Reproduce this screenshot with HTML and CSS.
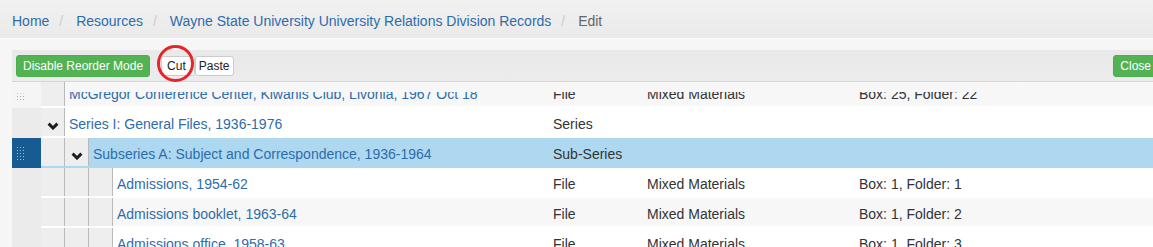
FILE: index.html
```html
<!DOCTYPE html>
<html>
<head>
	<title>Edit - Wayne State University University Relations Division Records</title>
	<link rel="stylesheet" href="styles.css">
</head>
<body>
	<nav class="crumbs">
		<a href="#">Home</a><span class="sep">/</span>
		<a href="#">Resources</a><span class="sep">/</span>
		<a href="#">Wayne State University University Relations Division Records</a><span class="sep">/</span>
		<span class="current">Edit</span>
	</nav>

	<div class="main">
		<div class="toolbar">
			<button type="button" class="btn btn-green">Disable Reorder Mode</button>
			<span class="marked"><button type="button" class="btn btn-plain btn-cut">Cut</button></span>
			<button type="button" class="btn btn-plain btn-paste">Paste</button>
			<button type="button" class="btn btn-green btn-close">Close</button>
		</div>

		<div class="tree">
			<div class="tree-inner">
				<div class="row row-peek">
					<div class="handle handle-light"><span class="grip"></span></div>
					<div class="row-body shade">
						<div class="indent"></div>
						<div class="cell title"><a href="#">McGregor Conference Center, Kiwanis Club, Livonia, 1967 Oct 18</a></div>
						<div class="cell type">File</div>
						<div class="cell format">Mixed Materials</div>
						<div class="cell container">Box: 25, Folder: 22</div>
					</div>
				</div>

				<div class="row">
					<div class="handle"></div>
					<div class="row-body">
						<div class="indent"><svg class="chevron" viewBox="0 0 12 8"><polyline points="1.6,1.6 6,6 10.4,1.6"/></svg></div>
						<div class="cell title"><a href="#">Series I: General Files, 1936-1976</a></div>
						<div class="cell type">Series</div>
						<div class="cell format"></div>
						<div class="cell container"></div>
					</div>
				</div>

				<div class="row row-selected">
					<div class="handle handle-dark"><span class="grip"></span></div>
					<div class="row-body">
						<div class="indent"></div>
						<div class="indent"><svg class="chevron" viewBox="0 0 12 8"><polyline points="1.6,1.6 6,6 10.4,1.6"/></svg></div>
						<div class="cell title"><a href="#">Subseries A: Subject and Correspondence, 1936-1964</a></div>
						<div class="cell type">Sub-Series</div>
						<div class="cell format"></div>
						<div class="cell container"></div>
					</div>
				</div>

				<div class="row">
					<div class="handle"></div>
					<div class="row-body">
						<div class="indent"></div>
						<div class="indent"></div>
						<div class="indent"></div>
						<div class="cell title"><a href="#">Admissions, 1954-62</a></div>
						<div class="cell type">File</div>
						<div class="cell format">Mixed Materials</div>
						<div class="cell container">Box: 1, Folder: 1</div>
					</div>
				</div>

				<div class="row">
					<div class="handle"></div>
					<div class="row-body shade">
						<div class="indent"></div>
						<div class="indent"></div>
						<div class="indent"></div>
						<div class="cell title"><a href="#">Admissions booklet, 1963-64</a></div>
						<div class="cell type">File</div>
						<div class="cell format">Mixed Materials</div>
						<div class="cell container">Box: 1, Folder: 2</div>
					</div>
				</div>

				<div class="row">
					<div class="handle"></div>
					<div class="row-body">
						<div class="indent"></div>
						<div class="indent"></div>
						<div class="indent"></div>
						<div class="cell title"><a href="#">Admissions office, 1958-63</a></div>
						<div class="cell type">File</div>
						<div class="cell format">Mixed Materials</div>
						<div class="cell container">Box: 1, Folder: 3</div>
					</div>
				</div>
			</div>
		</div>
	</div>
</body>
</html>
```

FILE: styles.css
```css
html, body {
	margin: 0;
	overflow: hidden;
}
body {
	width: 1153px;
	height: 247px;
	background-color: #f6f6f6;
	font-family: "Liberation Sans", Arial, sans-serif;
	font-size: 14px;
	line-height: 20px;
	color: #333;
}
a {
	color: #2d6cab;
	text-decoration: none;
}
.crumbs {
	height: 20px;
	padding: 11px 12px 7px;
	background: linear-gradient(#f1f1f1, #eaeaea);
	border-bottom: 1px solid #fbfbfb;
	white-space: nowrap;
}
.crumbs .sep {
	color: #ccc;
	padding: 0 9px 0 10px;
}
.crumbs .current {
	color: #666;
}
.main {
	width: 1150px;
	margin-top: 11px;
	margin-left: 12px;
}
.toolbar {
	display: flex;
	align-items: center;
	height: 31px;
	padding: 0 4px;
	background: linear-gradient(#e9e9e9, #ececec);
	border-bottom: 1px solid #d6d6d6;
}
.btn {
	font-family: inherit;
	font-size: 12px;
	line-height: 16px;
	border-radius: 3px;
	cursor: pointer;
	margin: 0;
}
.btn-green {
	background-color: #53b253;
	border: 1px solid #4cae4c;
	color: #fff;
	padding: 2px 6px;
}
.btn-plain {
	background-color: #fff;
	border: 1px solid #ccc;
	color: #222;
	padding: 1px 5px;
}
.btn-cut {
	padding: 1px 8px 1px 5px;
}
.btn-paste {
	padding: 1px 4px 1px 3px;
}
.btn-close {
	margin-left: auto;
}
.marked {
	position: relative;
	display: flex;
	margin-left: 11px;
}
.marked::after {
	content: "";
	position: absolute;
	left: -4px;
	top: -11px;
	width: 37px;
	height: 37px;
	box-sizing: border-box;
	border: 3px solid #e4262b;
	border-radius: 50%;
}
.tree {
	height: 165px;
	overflow: hidden;
}
.tree-inner {
	margin-top: -4px;
}
.row {
	display: flex;
	height: 30px;
}
.handle {
	flex: none;
	width: 29px;
	box-sizing: border-box;
	padding-left: 4px;
	background-color: #ebebeb;
	display: flex;
	align-items: center;
}
.handle-light {
	background-color: #f5f5f5;
}
.handle-dark {
	background-color: #175b93;
}
.grip {
	width: 9px;
	height: 15px;
	background-image: radial-gradient(circle, #a9a9a9 0.6px, transparent 0.9px);
	background-size: 3px 3px;
}
.handle-dark .grip {
	background-image: radial-gradient(circle, #9cbbd8 0.6px, transparent 0.9px);
}
.row-body {
	flex: 1;
	display: flex;
	background-color: #fff;
	border-bottom: 2px solid #fff;
}
.row-body.shade {
	background-color: #f7f7f7;
	border-bottom-color: #fff;
}
.row-selected .row-body {
	background-color: #aed8f0;
	border-bottom-color: #aed8f0;
}
.indent {
	flex: none;
	width: 24px;
	background-color: #eee;
	border-right: 1px solid #b9b9b9;
	display: flex;
	justify-content: center;
	padding-top: 14px;
	box-sizing: border-box;
}
.chevron {
	width: 12px;
	height: 8px;
	fill: none;
	stroke: #1e1e1e;
	stroke-width: 3;
}
.cell {
	padding: 6px 0 0 4px;
	white-space: nowrap;
	overflow: hidden;
	box-sizing: border-box;
}
.title {
	flex: 1;
}
.type {
	flex: none;
	width: 94px;
}
.format {
	flex: none;
	width: 212px;
}
.container {
	flex: none;
	width: 307px;
}
.row-peek .cell {
	clip-path: inset(14px 0 0 0);
}
.row-peek .grip {
	clip-path: inset(8px 0 0 0);
}
```
